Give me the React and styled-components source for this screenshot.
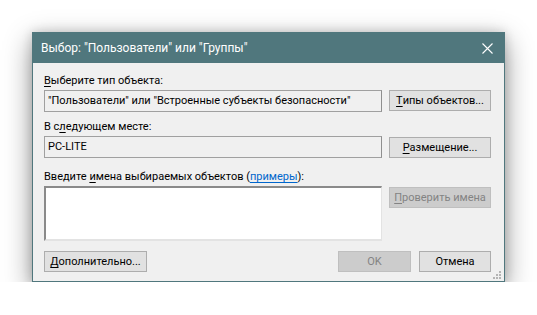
import React from 'react';
import styled, { createGlobalStyle } from 'styled-components';

const GlobalStyle = createGlobalStyle`
  html, body {
    margin: 0;
    padding: 0;
    background: #ffffff;
  }
  body {
    font-family: Roboto, "Noto Sans", "Liberation Sans", sans-serif;
    font-size: 11px;
    color: #000000;
  }
`;

const Page = styled.div`
  padding: 32px 0 0 32px;
`;

const Dialog = styled.div`
  width: 473px;
  height: 250px;
  box-sizing: border-box;
  border: 1px solid #50777d;
  background: #f0f0f0;
  box-shadow: 0 9px 26px rgba(0, 0, 0, 0.42), 0 0 10px rgba(0, 0, 0, 0.16);
  display: flex;
  flex-direction: column;
  position: relative;
`;

const TitleBar = styled.div`
  height: 30px;
  background: #50777d;
  color: #ffffff;
  display: flex;
  align-items: center;
  justify-content: space-between;
  padding-left: 8px;
  font-size: 12px;
`;

const CloseButton = styled.div`
  width: 32px;
  height: 30px;
  display: flex;
  align-items: center;
  justify-content: center;
  margin-right: 1px;
`;

const Body = styled.div`
  flex: 1;
  padding: 11px 13px 8px 11px;
  display: flex;
  flex-direction: column;
`;

const Label = styled.div`
  height: 14px;
  line-height: 14px;
  margin-top: ${({ $top }) => $top || 0}px;
  margin-bottom: 2px;
  white-space: nowrap;
`;

const Row = styled.div`
  display: grid;
  grid-template-columns: 338px 102px;
  column-gap: 7px;
  align-items: start;
`;

const ReadOnlyField = styled.div`
  height: 22px;
  box-sizing: border-box;
  border: 1px solid #a0a0a0;
  border-right-color: #8f8f8f;
  background: #f0f0f0;
  padding: 0 3px;
  line-height: 20px;
  white-space: nowrap;
  overflow: hidden;
`;

const NamesBox = styled.div`
  height: 55px;
  box-sizing: border-box;
  background: #ffffff;
  border-top: 2px solid #8a8a8a;
  border-left: 2px solid #8a8a8a;
  border-right: 1px solid #e3e3e3;
  border-bottom: 2px solid #e3e3e3;
`;

const Button = styled.div`
  height: 21px;
  box-sizing: border-box;
  width: ${({ $width }) => ($width ? `${$width}px` : 'auto')};
  border: 1px solid ${({ $disabled }) => ($disabled ? '#bfbfbf' : '#adadad')};
  background: ${({ $disabled }) => ($disabled ? '#cccccc' : '#e1e1e1')};
  color: ${({ $disabled }) => ($disabled ? '#838383' : '#000000')};
  display: flex;
  align-items: center;
  justify-content: center;
  line-height: 19px;
  white-space: nowrap;
  margin-top: ${({ $top }) => $top || 0}px;
`;

const Key = styled.span`
  text-decoration: underline;
  text-underline-offset: 2px;
`;

const Link = styled.span`
  color: #0066cc;
  text-decoration: underline;
  text-underline-offset: 2px;
`;

const Footer = styled.div`
  margin-top: 10px;
  display: flex;
  align-items: center;
  gap: 8px;
`;

const Spacer = styled.div`
  flex: 1;
`;

const Grip = styled.svg`
  position: absolute;
  right: 3px;
  bottom: 2px;
`;

function CloseIcon() {
  return (
    <svg width="11" height="11" viewBox="0 0 11 11">
      <path d="M0.5 0.5 L10.5 10.5 M10.5 0.5 L0.5 10.5" stroke="#ffffff" strokeWidth="1.1" />
    </svg>
  );
}

function SizeGrip() {
  const dots = [
    [6, 0],
    [3, 3],
    [6, 3],
    [0, 6],
    [3, 6],
    [6, 6],
  ];
  return (
    <Grip width="8" height="8" viewBox="0 0 8 8">
      {dots.map(([x, y]) => (
        <rect key={`${x}-${y}`} x={x} y={y} width="2" height="2" fill="#b4b4b4" />
      ))}
    </Grip>
  );
}

export default function App() {
  return (
    <Page>
      <GlobalStyle />
      <Dialog>
        <TitleBar>
          <span>Выбор: "Пользователи" или "Группы"</span>
          <CloseButton>
            <CloseIcon />
          </CloseButton>
        </TitleBar>
        <Body>
          <Label>
            <Key>В</Key>ыберите тип объекта:
          </Label>
          <Row>
            <ReadOnlyField>"Пользователи" или "Встроенные субъекты безопасности"</ReadOnlyField>
            <Button>
              <Key>Т</Key>ипы объектов...
            </Button>
          </Row>

          <Label $top={8}>
            В с<Key>л</Key>едующем месте:
          </Label>
          <Row>
            <ReadOnlyField>PC-LITE</ReadOnlyField>
            <Button $top={1}>
              <Key>Р</Key>азмещение...
            </Button>
          </Row>

          <Label $top={12}>
            Введите <Key>и</Key>мена выбираемых объектов (<Link>примеры</Link>):
          </Label>
          <Row>
            <NamesBox />
            <Button $disabled $top={1}>
              <Key>П</Key>роверить имена
            </Button>
          </Row>

          <Footer>
            <Button $width={103}>
              <Key>Д</Key>ополнительно...
            </Button>
            <Spacer />
            <Button $width={73} $disabled>
              OK
            </Button>
            <Button $width={72}>Отмена</Button>
          </Footer>
        </Body>
        <SizeGrip />
      </Dialog>
    </Page>
  );
}
